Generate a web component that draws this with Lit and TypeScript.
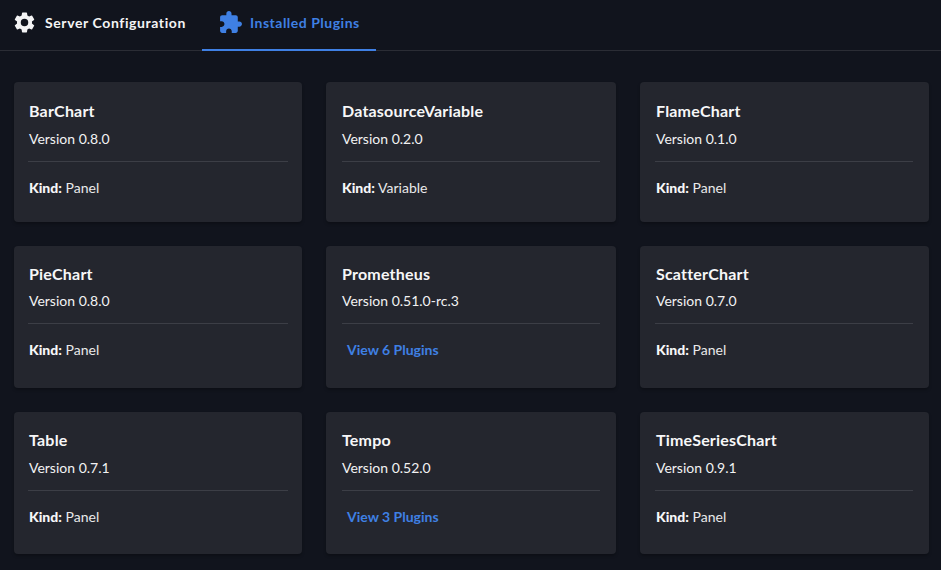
import {html, css, LitElement} from 'lit';
import {customElement} from 'lit/decorators.js';

interface Plugin {
    name: string;
    version: string;
    kind?: string;
    plugins?: number;
}

const PLUGINS: Plugin[] = [
    {name: 'BarChart', version: '0.8.0', kind: 'Panel'},
    {name: 'DatasourceVariable', version: '0.2.0', kind: 'Variable'},
    {name: 'FlameChart', version: '0.1.0', kind: 'Panel'},
    {name: 'PieChart', version: '0.8.0', kind: 'Panel'},
    {name: 'Prometheus', version: '0.51.0-rc.3', plugins: 6},
    {name: 'ScatterChart', version: '0.7.0', kind: 'Panel'},
    {name: 'Table', version: '0.7.1', kind: 'Panel'},
    {name: 'Tempo', version: '0.52.0', plugins: 3},
    {name: 'TimeSeriesChart', version: '0.9.1', kind: 'Panel'},
];

@customElement('app-root')
export class AppRoot extends LitElement {
    static styles = css`
        :host {
            display: block;
            height: 570px;
            overflow: hidden;
            background: #11141d;
            color: #fff;
            font-family: Lato, "Liberation Sans", sans-serif;
        }
        .tabs {
            display: flex;
            box-sizing: border-box;
            height: 51px;
            border-bottom: 1px solid #2b2d35;
        }
        .tab {
            display: flex;
            align-items: center;
            gap: 8px;
            box-sizing: border-box;
            height: 51px;
            padding: 0 16px 6px 12px;
            font-size: 14px;
            font-weight: 700;
            letter-spacing: 0.6px;
            color: #f4f4f5;
        }
        .tab svg {
            width: 25px;
            height: 25px;
            fill: currentColor;
            flex: none;
        }
        .tab.active {
            gap: 7px;
            padding: 0 16px 4px;
            letter-spacing: 0.5px;
            color: #3f80e4;
            border-bottom: 2px solid #3f80e4;
        }
        .grid {
            display: grid;
            grid-template-columns: 288px 290px 289px;
            grid-template-rows: 140px 142px 142px;
            gap: 24px;
            padding: 31px 0 0 14px;
        }
        .card {
            background: #24262e;
            border-radius: 4px;
            padding: 17px 16px 0;
            box-shadow: 0 2px 3px rgba(0, 0, 0, 0.25);
        }
        /* columns and rows do not share one rhythm in the design */
        .card:nth-child(3n + 1) {
            padding-left: 15px;
            padding-right: 15px;
        }
        .card:nth-child(-n + 3) {
            padding-top: 18px;
        }
        .name {
            font-size: 16px;
            font-weight: 700;
            letter-spacing: 0.2px;
            line-height: 22px;
            color: #f7f7f8;
        }
        .version {
            font-size: 14px;
            line-height: 22px;
            margin-top: 6px;
            color: #f2f2f3;
        }
        .card:nth-child(n + 4):nth-child(-n + 6) .version {
            margin-top: 5px;
        }
        .divider {
            height: 1px;
            background: #3c3e46;
            margin: 11px 0 0;
        }
        .card:nth-child(3n + 1) .divider {
            margin-left: -1px;
            margin-right: -1px;
        }
        .card:nth-child(3n) .divider {
            margin-left: -1px;
        }
        .foot {
            font-size: 14px;
            line-height: 20px;
            margin-top: 16px;
            color: #e9e9ea;
        }
        .foot b {
            font-weight: 900;
            color: #f7f7f8;
        }
        .link {
            font-size: 14px;
            font-weight: 700;
            line-height: 20px;
            margin: 16px 0 0 5px;
            color: #3f80e4;
        }
    `;

    renderCard(p: Plugin) {
        return html`
            <div class="card">
                <div class="name">${p.name}</div>
                <div class="version">Version ${p.version}</div>
                <div class="divider"></div>
                ${p.plugins
                    ? html`<div class="link">View ${p.plugins} Plugins</div>`
                    : html`<div class="foot"><b>Kind:</b> ${p.kind}</div>`}
            </div>
        `;
    }

    render() {
        return html`
            <div class="tabs">
                <div class="tab">
                    <svg viewBox="0 0 24 24"><path d="M19.14 12.94c.04-.3.06-.61.06-.94 0-.32-.02-.64-.07-.94l2.03-1.58a.49.49 0 0 0 .12-.61l-1.92-3.32a.49.49 0 0 0-.59-.22l-2.39.96c-.5-.38-1.03-.7-1.62-.94l-.36-2.54a.48.48 0 0 0-.48-.41h-3.84a.47.47 0 0 0-.47.41l-.36 2.54c-.59.24-1.13.57-1.62.94l-2.39-.96a.48.48 0 0 0-.59.22L2.74 8.87a.47.47 0 0 0 .12.61l2.03 1.58c-.05.3-.09.63-.09.94s.02.64.07.94l-2.03 1.58a.49.49 0 0 0-.12.61l1.92 3.32c.12.22.37.29.59.22l2.39-.96c.5.38 1.03.7 1.62.94l.36 2.54c.05.24.24.41.48.41h3.84c.24 0 .44-.17.47-.41l.36-2.54c.59-.24 1.13-.56 1.62-.94l2.39.96c.22.08.47 0 .59-.22l1.92-3.32a.46.46 0 0 0-.12-.61l-2.01-1.58zM12 15.6A3.61 3.61 0 0 1 8.4 12 3.61 3.61 0 0 1 12 8.4a3.61 3.61 0 0 1 3.6 3.6 3.61 3.61 0 0 1-3.6 3.6z"/></svg>
                    Server Configuration
                </div>
                <div class="tab active">
                    <svg viewBox="0 0 24 24"><path d="M20.5 11H19V7c0-1.1-.9-2-2-2h-4V3.5C13 2.12 11.88 1 10.5 1S8 2.12 8 3.5V5H4c-1.1 0-1.99.9-1.99 2v3.8H3.5c1.49 0 2.7 1.21 2.7 2.7s-1.21 2.7-2.7 2.7H2V20c0 1.1.9 2 2 2h3.8v-1.5c0-1.49 1.21-2.7 2.7-2.7 1.49 0 2.7 1.21 2.7 2.7V22H17c1.1 0 2-.9 2-2v-4h1.5c1.38 0 2.5-1.12 2.5-2.5S21.88 11 20.5 11z"/></svg>
                    Installed Plugins
                </div>
            </div>
            <div class="grid">
                ${PLUGINS.map((p) => this.renderCard(p))}
            </div>
        `;
    }
}
